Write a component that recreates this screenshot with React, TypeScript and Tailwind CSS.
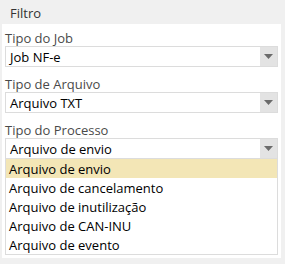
import React from "react";

function Select({ value }: { value: string }) {
  return (
    <div className="flex h-[21px] border border-[#dcdcdc] bg-white">
      <div className="flex-1 pl-[4px] pt-[1px] leading-[19px] text-[13px] text-black">{value}</div>
      <div className="flex w-[17px] items-center justify-center bg-[#e3e3e3]">
        <svg width="9" height="5" viewBox="0 0 9 5">
          <path d="M0 0 H9 L4.5 5 Z" fill="#6b6b6b" />
        </svg>
      </div>
    </div>
  );
}

export default function App() {
  const items = [
    "Arquivo de envio",
    "Arquivo de cancelamento",
    "Arquivo de inutilização",
    "Arquivo de CAN-INU",
    "Arquivo de evento",
  ];
  return (
    <div
      className="h-[264px] w-[285px] bg-[#f0f0f0]"
      style={{ fontFamily: '"Open Sans", "Noto Sans", sans-serif' }}
    >
      <div className="h-[24px] pl-[10px] pt-[1px] text-[13px] leading-[24px] text-[#333]">Filtro</div>
      <div className="mx-[2px] flex h-[234px] w-[279px] flex-col bg-white px-[3px] pt-[7px]">
        <div className="h-[15px] text-[13px] leading-[15px] text-[#4a4a4a]">Tipo do Job</div>
        <Select value="Job NF-e" />
        <div className="mt-[10px] h-[15px] text-[13px] leading-[15px] text-[#4a4a4a]">Tipo de Arquivo</div>
        <Select value="Arquivo TXT" />
        <div className="mt-[10px] h-[15px] text-[13px] leading-[15px] text-[#4a4a4a]">Tipo do Processo</div>
        <Select value="Arquivo de envio" />
        <div className="flex flex-col border border-t-0 border-[#dcdcdc]">
          {items.map((it, i) => (
            <div
              key={it}
              className={
                i === 0
                  ? "h-[19px] bg-[#f3e6b6] pl-[3px] pt-[1px] text-[13px] leading-[19px] text-black"
                  : "h-[19px] pl-[3px] pt-[1px] text-[13px] leading-[19px] text-black"
              }
            >
              {it}
            </div>
          ))}
        </div>
      </div>
    </div>
  );
}
